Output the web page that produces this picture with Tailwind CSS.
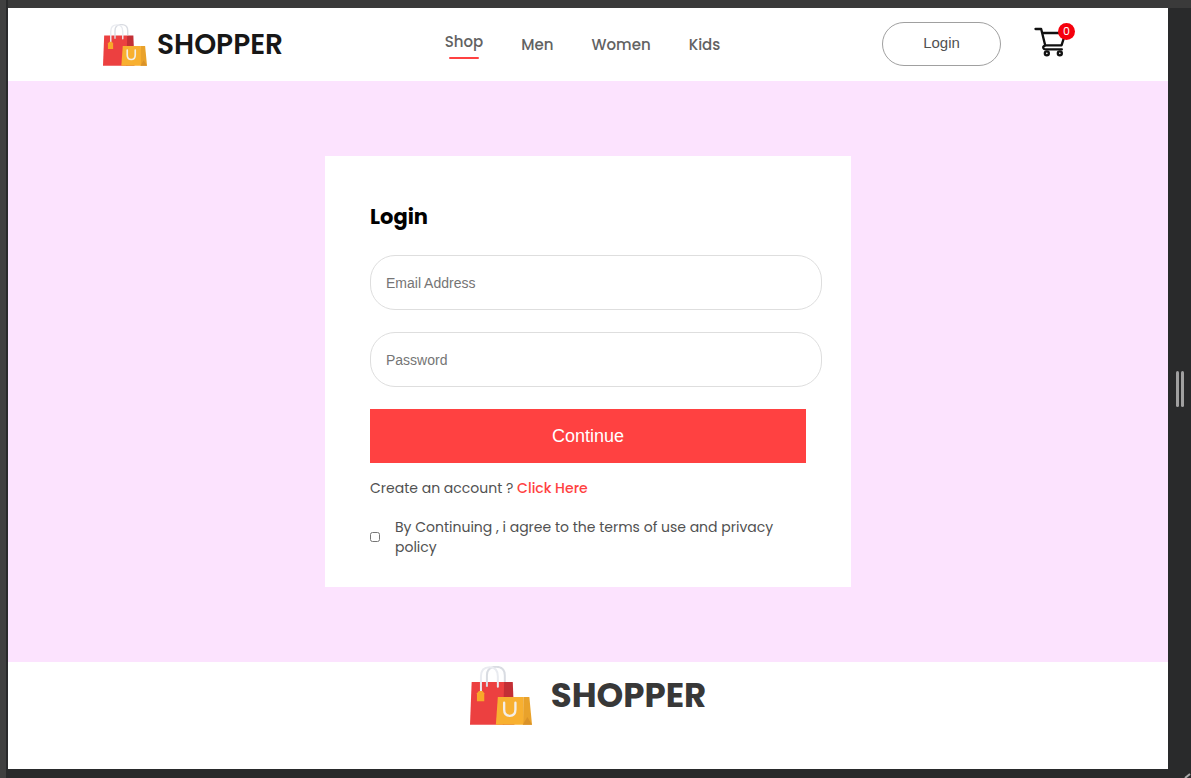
<!DOCTYPE html>
<html lang="en">
<head>
<meta charset="utf-8">
<meta name="viewport" content="width=device-width, initial-scale=1">
<title>Shopper</title>
<script src="https://cdn.jsdelivr.net/npm/@tailwindcss/browser@4"></script>
</head>
<body class="flex min-h-screen flex-col bg-[#292a2b] font-['Poppins','Inter',sans-serif] text-[#515151]">
<svg class="hidden" aria-hidden="true">
  <symbol id="bags" viewBox="45 33 187 177">
    <path d="M50 81H152L148 210H45Z" fill="#ec4040"/>
    <path d="M148 81H174L179 210H144Z" fill="#c32f35"/>
    <path d="M96 95V61Q96 35 124 35Q150 35 150 61V81" fill="none" stroke="#d9dce2" stroke-width="6"/>
    <path d="M78 112V64Q78 36 104 36Q129 36 129 64V95" fill="none" stroke="#e9ebf0" stroke-width="6" stroke-linecap="round"/>
    <path d="M72 108H83L88 115V139H66V115Z" fill="#f8a82a"/>
    <path d="M129 126H206L208 210H123Z" fill="#f8b030"/>
    <path d="M206 126H224L232 210H206Z" fill="#e9a22b"/>
    <path d="M218 186L232 210H204Z" fill="#da9228"/>
    <path d="M148 143V164Q148 183 165 183Q182 183 182 164V143" fill="none" stroke="#f4eee6" stroke-width="7" stroke-linecap="round"/>
  </symbol>
</svg>
<div class="flex grow">
  <div class="w-2 shrink-0 border-r-2 border-[#292a2b] bg-[#404040]"></div>
  <div class="flex grow flex-col border-t-8 border-[#3a3a3a] pb-[9px]">
    <header class="flex h-[73px] items-center justify-between bg-white pr-[93px] pl-[95px]">
      <a href="#" class="flex items-center gap-[10px] text-[28px] font-semibold text-[#171717]">
        <svg class="h-[42px] w-[44px]" aria-hidden="true"><use href="#bags"/></svg>
        SHOPPER
      </a>
      <nav class="flex items-center gap-[38px] text-[15px] leading-6 font-medium text-[#626262]">
        <a href="#" class="flex flex-col items-center gap-[3px]">Shop<span class="h-[2px] w-[30px] rounded-full bg-[#ff4141]"></span></a>
        <a href="#">Men</a>
        <a href="#">Women</a>
        <a href="#">Kids</a>
      </nav>
      <div class="flex items-center gap-[33px] pb-[2px]">
        <button type="button" class="h-11 w-[119px] rounded-full border border-[#a0a0a0] font-['Liberation_Sans',sans-serif] text-[15px] text-[#515151]">Login</button>
        <a href="#" class="relative mb-1 block w-[41px]" aria-label="Cart">
          <svg class="h-[30px] w-8" viewBox="490 51 95 90" fill="none" stroke="#111" stroke-width="7" stroke-linecap="round" stroke-linejoin="round" aria-hidden="true">
            <path d="M494 57H511L523 106H572L584 69H516M523 107Q515 109 518 115Q519 118 525 118H573"/>
            <circle cx="528" cy="130" r="6"/><circle cx="567" cy="130" r="6"/>
          </svg>
          <span class="absolute -top-1 right-0 flex size-[17px] items-center justify-center rounded-full bg-[#f5000c] text-[11px] text-white">0</span>
        </a>
      </div>
    </header>
    <main class="grow bg-[#fce3fe] py-[75px]">
      <form class="mx-auto max-w-[526px] bg-white pt-11 pr-[29px] pb-[30px] pl-[45px]">
        <h1 class="text-[21px] leading-[33px] font-bold text-black">Login</h1>
        <div class="mt-[22px] flex flex-col gap-[22px]">
          <input type="email" aria-label="Email Address" placeholder="Email Address" class="h-[55px] w-full rounded-[25px] border border-[#dedede] px-[15px] font-['Liberation_Sans',sans-serif] text-sm placeholder:text-[#757575]">
          <input type="password" aria-label="Password" placeholder="Password" class="h-[55px] w-full rounded-[25px] border border-[#dedede] px-[15px] font-['Liberation_Sans',sans-serif] text-sm placeholder:text-[#757575]">
          <button type="button" class="mr-4 h-[54px] bg-[#ff4141] font-['Liberation_Sans',sans-serif] text-lg text-white">Continue</button>
        </div>
        <p class="mt-[15px] text-sm leading-5">Create an account ? <a href="#" class="font-medium text-[#ff4141]">Click Here</a></p>
        <div class="mt-[19px] mr-4 flex items-center gap-[15px]">
          <input id="agree" type="checkbox" class="size-[10px] shrink-0">
          <label for="agree" class="text-sm leading-5">By Continuing , i agree to the terms of use and privacy policy</label>
        </div>
      </form>
    </main>
    <footer class="h-[107px] bg-white pt-1">
      <a href="#" class="flex items-center justify-center gap-[19px] text-[34px] font-bold text-[#383838]">
        <svg class="h-[59px] w-[62px]" aria-hidden="true"><use href="#bags"/></svg>
        SHOPPER
      </a>
    </footer>
  </div>
  <div class="relative flex w-[23px] shrink-0 items-center justify-center gap-[2px] border-t-8 border-[#3a3a3a] bg-[#292a2b] pb-2">
    <span class="h-9 w-[3px] rounded-full bg-[#a0a0a0]"></span>
    <span class="h-9 w-[3px] rounded-full bg-[#a0a0a0]"></span>
    <svg class="absolute right-0 bottom-0 size-2" viewBox="0 0 8 8" aria-hidden="true"><path d="M2 8L7 4" stroke="#aaa" stroke-width="2"/></svg>
  </div>
</div>
</body>
</html>
